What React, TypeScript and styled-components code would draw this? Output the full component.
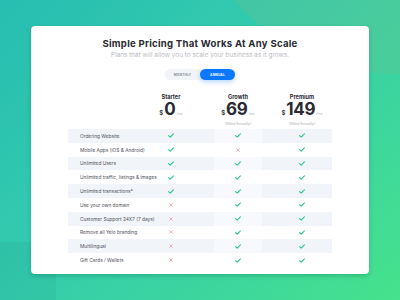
import React from 'react';
import styled, { createGlobalStyle } from 'styled-components';

const GlobalStyle = createGlobalStyle`
  html, body {
    margin: 0;
    padding: 0;
  }
  body {
    font-family: 'Inter', 'Noto Sans', sans-serif;
  }
`;

const Page = styled.div`
  position: relative;
  width: 400px;
  height: 300px;
  overflow: hidden;
  background: linear-gradient(135deg, #27bdb1 0%, #33cbae 40%, #3ed79c 75%, #47e28c 100%);
  display: flex;
  justify-content: center;
  padding-top: 26px;
  box-sizing: border-box;
`;

const Blob = styled.div`
  position: absolute;
  top: -374px;
  left: 176px;
  width: 448px;
  height: 448px;
  border-radius: 50%;
  background: rgba(110, 190, 140, 0.28);
`;

const CornerShade = styled.div`
  position: absolute;
  left: -40px;
  top: 242px;
  width: 96px;
  height: 90px;
  border-radius: 0 30px 0 0;
  background: rgba(30, 140, 130, 0.12);
`;

const Card = styled.div`
  position: relative;
  width: 338px;
  height: 248px;
  background: #fff;
  border-radius: 4px;
  box-shadow: 0 2px 4px rgba(0, 80, 60, 0.25);
  display: flex;
  flex-direction: column;
  align-items: center;
  padding-top: 11px;
  box-sizing: border-box;
`;

const Title = styled.h1`
  margin: 0;
  font-size: 9.6px;
  line-height: 13px;
  font-weight: 700;
  color: #2a2a33;
  letter-spacing: 0.25px;
`;

const Subtitle = styled.p`
  margin: 0;
  font-size: 6.3px;
  line-height: 10px;
  color: #a8a8b0;
  font-weight: 300;
  letter-spacing: 0.1px;
`;

const Toggle = styled.div`
  margin-top: 9px;
  width: 70px;
  height: 11px;
  border-radius: 6px;
  background: #f1f4f8;
  display: flex;
`;

const ToggleOption = styled.div<{ $active?: boolean }>`
  flex: 1;
  border-radius: 6px;
  display: flex;
  align-items: center;
  justify-content: center;
  font-size: 3.2px;
  font-weight: 700;
  letter-spacing: 0.2px;
  color: ${p => (p.$active ? '#fff' : '#8c8f99')};
  background: ${p => (p.$active ? '#0c78ff' : 'transparent')};
  box-shadow: ${p => (p.$active ? '0 2px 5px rgba(12, 120, 255, 0.3)' : 'none')};
`;

const Table = styled.div`
  margin-top: 13px;
  width: 264px;
  display: flex;
  flex-direction: column;
`;

const Row = styled.div<{ $shade?: boolean }>`
  display: grid;
  grid-template-columns: 78px 68px 48px 1fr;
  height: 13.8px;
  align-items: stretch;
  background: ${p => (p.$shade ? '#f1f5fa' : 'transparent')};
`;

const Label = styled.div`
  padding-left: 12px;
  display: flex;
  align-items: center;
  font-size: 4.8px;
  color: #50525a;
  white-space: nowrap;
`;

const Cell = styled.div<{ $col: number; $shade?: boolean }>`
  display: flex;
  align-items: center;
  justify-content: center;
  padding-right: ${p => (p.$col === 0 ? '18px' : '0')};
  padding-left: ${p => (p.$col === 2 ? '10px' : '0')};
  background: ${p => (p.$col === 1 && p.$shade ? '#f7f9fc' : 'transparent')};
`;

const HeadRow = styled.div`
  display: grid;
  grid-template-columns: 78px 68px 48px 1fr;
  height: 36px;
`;

const Plan = styled.div<{ $col: number }>`
  display: flex;
  flex-direction: column;
  align-items: center;
  padding-right: ${p => (p.$col === 0 ? '18px' : '0')};
  padding-left: ${p => (p.$col === 2 ? '10px' : '0')};
`;

const PlanName = styled.div`
  font-size: 5.6px;
  font-weight: 700;
  color: #2a2a33;
  line-height: 8px;
`;

const Price = styled.div`
  display: flex;
  align-items: baseline;
  line-height: 16px;
`;

const Dollar = styled.span`
  font-size: 6px;
  font-weight: 600;
  color: #2a2a33;
  margin-right: 1px;
`;

const Amount = styled.span`
  font-size: 17px;
  font-weight: 700;
  color: #2a2a33;
  letter-spacing: -0.3px;
`;

const Per = styled.span`
  font-size: 3.4px;
  color: #b4b6bd;
  margin-left: 1px;
`;

const Billed = styled.div`
  font-size: 3.4px;
  color: #a9abb2;
`;

const Check = () => (
  <svg width="6" height="5" viewBox="0 0 6 5">
    <path d="M0.6 2.6 L2.2 4.1 L5.4 0.8" fill="none" stroke="#27c98a" strokeWidth="1.1" strokeLinecap="round" strokeLinejoin="round" />
  </svg>
);

const Cross = () => (
  <svg width="4" height="4" viewBox="0 0 4 4">
    <path d="M0.6 0.6 L3.4 3.4 M3.4 0.6 L0.6 3.4" fill="none" stroke="#f59aa5" strokeWidth="0.8" strokeLinecap="round" />
  </svg>
);

const features: [string, boolean][] = [
  ['Ordering Website', true],
  ['Mobile Apps (iOS & Android)', true],
  ['Unlimited Users', true],
  ['Unlimited traffic, listings & images', true],
  ['Unlimited transactions*', true],
  ['Use your own domain', false],
  ['Customer Support 24X7 (7 days)', false],
  ['Remove all Yelo branding', false],
  ['Multilingual', false],
  ['Gift Cards / Wallets', false],
];

const growthAt = (i: number) => i !== 1;

const plans = [
  { name: 'Starter', price: '0', billed: false },
  { name: 'Growth', price: '69', billed: true },
  { name: 'Premium', price: '149', billed: true },
];

const App = () => {
  return (
    <Page>
      <GlobalStyle />
      <Blob />
      <CornerShade />
      <Card>
        <Title>Simple Pricing That Works At Any Scale</Title>
        <Subtitle>Plans that will allow you to scale your business as it grows.</Subtitle>
        <Toggle>
          <ToggleOption>MONTHLY</ToggleOption>
          <ToggleOption $active>ANNUAL</ToggleOption>
        </Toggle>
        <Table>
          <HeadRow>
            <div />
            {plans.map((p, i) => (
              <Plan key={p.name} $col={i}>
                <PlanName>{p.name}</PlanName>
                <Price>
                  <Dollar>$</Dollar>
                  <Amount>{p.price}</Amount>
                  <Per>/mo</Per>
                </Price>
                {p.billed && <Billed>(Billed Annually)</Billed>}
              </Plan>
            ))}
          </HeadRow>
          {features.map(([label, starter], i) => {
            const shade = i % 2 === 0;
            return (
              <Row key={label} $shade={shade}>
                <Label>{label}</Label>
                <Cell $col={0}>{starter ? <Check /> : <Cross />}</Cell>
                <Cell $col={1} $shade={shade}>{growthAt(i) ? <Check /> : <Cross />}</Cell>
                <Cell $col={2}><Check /></Cell>
              </Row>
            );
          })}
        </Table>
      </Card>
    </Page>
  );
};

export default App;
